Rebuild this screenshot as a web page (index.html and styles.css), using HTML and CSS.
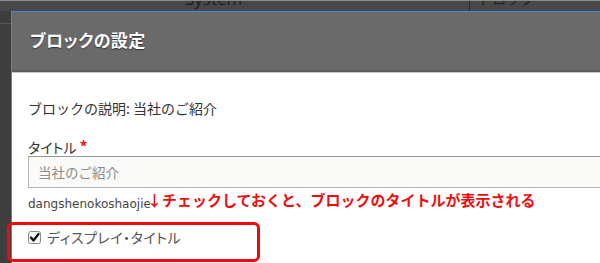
FILE: index.html
```html
<!DOCTYPE html>
<html lang="ja">
<head>
<meta charset="utf-8">
<link rel="stylesheet" href="styles.css">
</head>
<body>
<div class="page">
  <div class="topbar">
    <span class="sys">System</span>
    <span class="divider"></span>
    <span class="more">ドロップ</span>
  </div>
  <div class="main">
    <div class="leftstrip"><div class="lsline"></div></div>
    <div class="dialog">
      <div class="titlebar"><h1 class="title">ブロックの設定</h1></div>
      <div class="body">
        <p class="desc">ブロックの説明: 当社のご紹介</p>
        <label class="lbl">タイトル <span class="req">*</span></label>
        <div class="input">当社のご紹介</div>
        <p class="machine">dangshenokoshaojie</p>
        <div class="check">
          <span class="box"><svg viewBox="0 0 13 13" width="13" height="13"><rect x="0.5" y="0.5" width="12" height="12" rx="2" fill="#f4f4f4" stroke="#8a8a8a"/><path d="M3 6.5 L5.5 9.5 L10.5 3" fill="none" stroke="#111" stroke-width="2.2" stroke-linecap="round" stroke-linejoin="round"/></svg></span>
          <span class="cklabel">ディスプレイ・タイトル</span>
        </div>
      </div>
    </div>
  </div>
  <div class="note">↓チェックしておくと、ブロックのタイトルが表示される</div>
  <div class="redbox"></div>
</div>
</body>
</html>
```
FILE: styles.css
```css
* { box-sizing: border-box; }
html, body { margin: 0; padding: 0; }
body {
  width: 600px; height: 263px; overflow: hidden;
  background: #464646;
  font-family: "Noto Sans CJK JP", "Noto Sans", sans-serif;
}
.page { position: relative; width: 600px; height: 263px; overflow: hidden; }
.topbar {
  height: 11px; background: #484846; border-top: 1px solid #8a8a8a;
  display: flex; align-items: flex-start; overflow: hidden; position: relative;
}
.sys {
  margin-left: 185px; margin-top: -12px; font-family: "Open Sans", sans-serif;
  font-size: 17px; color: #1e1e1e; line-height: 20px;
}
.divider { margin-left: 227px; width: 1px; height: 11px; background: #2a2a2a; }
.more { margin-left: 8px; margin-top: -13px; font-size: 14px; color: #222; line-height: 20px; }
.main { display: flex; height: 252px; }
.leftstrip { width: 11px; background: #3e3e3e; flex: none; padding-top: 12px; }
.lsline { height: 1px; background: #575757; }
.dialog {
  flex: 1; border-top: 1px solid #4f80d8; border-left: 1px solid #4f80d8;
  background: #fff;
}
.titlebar {
  height: 60px; background: #6a6a6a;
  border-bottom: 2px solid #5c5c5c;
  box-shadow: 0 1px 0 #c8c8c8;
  display: flex; align-items: center; padding-left: 18px;
}
.title {
  margin: 0; font-size: 17px; font-weight: 700; color: #fff;
  text-shadow: 0 1px 1px #333;
  font-feature-settings: "palt"; letter-spacing: 0.3px;
  padding-bottom: 3px;
}
.body { padding: 26px 0 0 16px; }
.desc {
  margin: 0; font-size: 14px; color: #333; line-height: 20px;
}
.lbl {
  display: block; margin-top: 18px; font-size: 14px; color: #333; line-height: 20px;
  font-feature-settings: "palt";
}
.req { color: #e8230c; font-weight: 700; font-size: 16px; }
.input {
  margin-top: -1px; height: 32px; border: 1px solid #b4b4b4; border-top-color: #999;
  border-right: none; background: #fafaf8; padding-left: 9px;
  font-size: 13.5px; color: #8a8a8a; line-height: 30px;
}
.machine {
  margin: 5px 0 0; font-family: "DejaVu Sans", sans-serif;
  font-size: 12px; color: #444; line-height: 22px;
}
.check { display: flex; align-items: center; margin-top: 12px; height: 20px; }
.box { display: flex; width: 13px; height: 13px; }
.cklabel {
  margin-left: 6px; font-size: 14px; color: #555;
  font-feature-settings: "palt"; letter-spacing: 0.5px; line-height: 20px;
}
.note {
  position: absolute; left: 147px; top: 189px;
  font-size: 15px; font-weight: 700; color: #f00c0c; line-height: 22px;
  text-shadow: 0 0 2px #fff, 0 0 2px #fff, 1px 1px 0 #fff, -1px -1px 0 #fff, 1px -1px 0 #fff, -1px 1px 0 #fff;
}
.redbox {
  position: absolute; left: 7px; top: 222px; width: 253px; height: 40px;
  border: 3px solid #f20a0a; border-radius: 6px;
}
```
